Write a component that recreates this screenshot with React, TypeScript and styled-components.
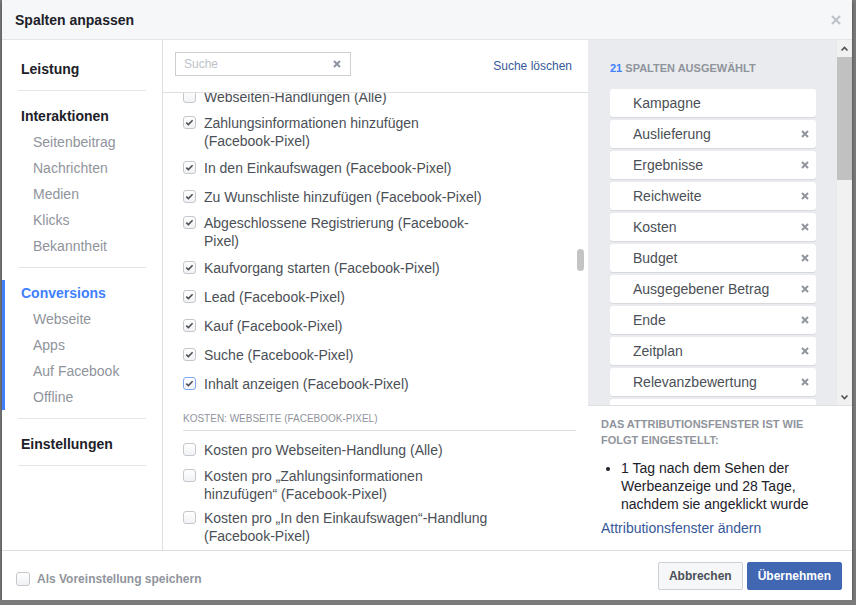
import React from 'react';
import styled, { createGlobalStyle } from 'styled-components';

const GlobalStyle = createGlobalStyle`
  html, body {
    margin: 0;
    padding: 0;
  }
  body {
    background: #7a7a7a;
    font-family: "Liberation Sans", Arial, sans-serif;
  }
  * {
    box-sizing: border-box;
  }
`;

const Page = styled.div`
  padding-left: 2px;
`;

const Dialog = styled.div`
  width: 850px;
  height: 600px;
  background: #fff;
  display: flex;
  flex-direction: column;
  box-shadow: 0 2px 3px rgba(0, 0, 0, 0.45);
`;

const Header = styled.div`
  height: 40px;
  flex: none;
  display: flex;
  align-items: center;
  justify-content: space-between;
  padding: 0 11px 0 13px;
  background: #f6f7f9;
  border-bottom: 1px solid #e5e5e5;
`;

const Title = styled.div`
  font-size: 14px;
  font-weight: bold;
  color: #1d2129;
`;

const IconButton = styled.span`
  display: flex;
  align-items: center;
  justify-content: center;
  cursor: pointer;
`;

const Body = styled.div`
  flex: 1;
  display: flex;
  min-height: 0;
`;

/* left navigation */

const Nav = styled.div`
  width: 161px;
  flex: none;
  border-right: 1px solid #dddfe2;
  padding-top: 4px;
`;

const NavSection = styled.div`
  padding: 12px 0 8px;
`;

const NavGroup = styled.div<{ $active?: boolean }>`
  border-left: 3px solid ${(p) => (p.$active ? '#4080ff' : 'transparent')};
  padding-left: 16px;
`;

const NavHeading = styled.div<{ $active?: boolean }>`
  font-size: 14px;
  font-weight: bold;
  line-height: 26px;
  color: ${(p) => (p.$active ? '#4080ff' : '#1d2129')};
`;

const NavItem = styled.div`
  font-size: 14px;
  line-height: 26px;
  color: #90949c;
  padding-left: 12px;
`;

const Divider = styled.div`
  height: 1px;
  margin: 0 16px;
  background: #e5e5e5;
`;

/* middle column */

const Middle = styled.div`
  width: 425px;
  flex: none;
  display: flex;
  flex-direction: column;
`;

const SearchBar = styled.div`
  height: 53px;
  flex: none;
  display: flex;
  align-items: flex-start;
  padding: 12px 16px 0 12px;
  border-bottom: 1px solid #dddfe2;
`;

const SearchBox = styled.div`
  width: 176px;
  height: 24px;
  display: flex;
  align-items: center;
  padding: 0 9px 0 8px;
  border: 1px solid #ccd0d5;
`;

const SearchInput = styled.input`
  flex: 1;
  min-width: 0;
  border: none;
  outline: none;
  padding: 0;
  background: transparent;
  font-family: inherit;
  font-size: 12px;
  color: #1d2129;
  &::placeholder {
    color: #bec2c9;
  }
`;

const TextLink = styled.a<{ $size?: number }>`
  font-size: ${(p) => p.$size ?? 12}px;
  line-height: ${(p) => (p.$size ? 18 : 16)}px;
  color: #365899;
  text-decoration: none;
  cursor: pointer;
`;

const ClearLink = styled(TextLink)`
  margin-left: auto;
  margin-top: 6px;
`;

const ListViewport = styled.div`
  flex: 1;
  overflow: hidden;
  position: relative;
`;

const List = styled.div`
  display: flex;
  flex-direction: column;
  margin-top: -8px;
  padding: 0 12px 0 20px;
`;

const Row = styled.div`
  display: flex;
  align-items: center;
  min-height: 23px;
  margin-bottom: 6px;
`;

const RowInner = styled.label`
  display: flex;
  align-items: flex-start;
  gap: 8px;
  cursor: pointer;
`;

const RowLabel = styled.span`
  max-width: 286px;
  font-size: 14px;
  line-height: 18px;
  color: #4b4f56;
`;

const Box = styled.span<{ $size: number; $focus?: boolean }>`
  width: ${(p) => p.$size}px;
  height: ${(p) => p.$size}px;
  flex: none;
  margin-top: ${(p) => (p.$size === 13 ? 2 : 0)}px;
  display: flex;
  align-items: center;
  justify-content: center;
  border: 1px solid ${(p) => (p.$focus ? '#7fa8f5' : '#c4c7cc')};
  border-radius: 3px;
  background: linear-gradient(#fff, #f1f2f4);
`;

const GroupHead = styled.div`
  margin: 11px 0 7px;
  padding-bottom: 4px;
  border-bottom: 1px solid #dddfe2;
  font-size: 10px;
  line-height: 14px;
  color: #90949c;
  text-transform: uppercase;
`;

const Thumb = styled.div`
  position: absolute;
  top: 156px;
  right: 4px;
  width: 7px;
  height: 22px;
  border-radius: 4px;
  background: #c4c4c4;
`;

/* right panel */

const Right = styled.div`
  flex: 1;
  display: flex;
  flex-direction: column;
`;

const SelectedArea = styled.div`
  height: 365px;
  flex: none;
  display: flex;
  background: #e9ebee;
`;

const SelectedScroll = styled.div`
  flex: 1;
  overflow: hidden;
  padding: 20px 21px 0 22px;
`;

const SmallCaps = styled.div`
  font-size: 11px;
  font-weight: bold;
  line-height: 16px;
  color: #90949c;
  text-transform: uppercase;
`;

const SelectedHeading = styled(SmallCaps)`
  margin-bottom: 13px;
`;

const Count = styled.span`
  color: #4080ff;
`;

const ColumnList = styled.div`
  display: flex;
  flex-direction: column;
  gap: 3px;
`;

const ColumnItem = styled.div`
  height: 28px;
  flex: none;
  display: flex;
  align-items: center;
  justify-content: space-between;
  padding: 0 7px 0 23px;
  background: #fff;
  border-radius: 3px;
  box-shadow: 0 1px 0 #d6d9dd;
  font-size: 14px;
  color: #4b4f56;
`;

const ScrollTrack = styled.div`
  width: 15px;
  flex: none;
  display: flex;
  flex-direction: column;
  background: #f1f1f1;
`;

const ScrollArrow = styled.div`
  height: 17px;
  flex: none;
  display: flex;
  align-items: center;
  justify-content: center;
`;

const ScrollThumb = styled.div`
  height: 123px;
  flex: none;
  background: #c1c1c1;
`;

const Spacer = styled.div`
  flex: 1;
`;

const AttrBox = styled.div`
  flex: 1;
  border-top: 1px solid #dddfe2;
  padding: 10px 12px 0 13px;
`;

const BulletList = styled.ul`
  margin: 11px 0 6px;
  padding-left: 20px;
  font-size: 14px;
  line-height: 18px;
  color: #1d2129;
`;

/* footer */

const Footer = styled.div`
  height: 50px;
  flex: none;
  display: flex;
  align-items: center;
  justify-content: space-between;
  padding: 0 10px 0 14px;
  border-top: 1px solid #dddfe2;
`;

const PresetLabel = styled.label`
  display: flex;
  align-items: center;
  gap: 7px;
  margin-top: 7px;
  font-size: 12px;
  font-weight: bold;
  color: #90949c;
`;

const Buttons = styled.div`
  display: flex;
  gap: 4px;
`;

const Button = styled.button<{ $primary?: boolean }>`
  height: 28px;
  padding: 0 10px;
  border-radius: 2px;
  border: 1px solid ${(p) => (p.$primary ? '#4267b2' : '#ced0d4')};
  background: ${(p) => (p.$primary ? '#4267b2' : '#f6f7f9')};
  color: ${(p) => (p.$primary ? '#fff' : '#4b4f56')};
  font-family: inherit;
  font-size: 12px;
  font-weight: bold;
  cursor: pointer;
`;

const Cross: React.FC<{ size: number; color: string; width?: number }> = ({ size, color, width = 2 }) => (
  <svg width={size} height={size} viewBox={`0 0 ${size} ${size}`}>
    <path d={`M1 1L${size - 1} ${size - 1}M${size - 1} 1L1 ${size - 1}`} stroke={color} strokeWidth={width} />
  </svg>
);

const Check = () => (
  <svg width="11" height="11" viewBox="0 0 11 11">
    <polyline points="2.3,5.6 4.4,7.6 8.6,3.2" fill="none" stroke="#4b4f56" strokeWidth="1.6" />
  </svg>
);

const Chevron: React.FC<{ down?: boolean }> = ({ down }) => (
  <svg width="9" height="6" viewBox="0 0 9 6">
    <polyline
      points={down ? '1.5,1.5 4.5,4.5 7.5,1.5' : '1.5,4.5 4.5,1.5 7.5,4.5'}
      fill="none"
      stroke="#505050"
      strokeWidth="1.6"
    />
  </svg>
);

const Checkbox: React.FC<{ checked?: boolean; focus?: boolean; size?: number }> = ({ checked, focus, size = 13 }) => (
  <Box $size={size} $focus={focus}>
    {checked && <Check />}
  </Box>
);

const navSections = [
  { title: 'Leistung', items: [] as string[] },
  { title: 'Interaktionen', items: ['Seitenbeitrag', 'Nachrichten', 'Medien', 'Klicks', 'Bekanntheit'] },
  { title: 'Conversions', items: ['Webseite', 'Apps', 'Auf Facebook', 'Offline'], active: true },
  { title: 'Einstellungen', items: [] as string[] },
];

type Item = { label: string; checked?: boolean; focus?: boolean };

const conversionItems: Item[] = [
  { label: 'Webseiten-Handlungen (Alle)' },
  { label: 'Zahlungsinformationen hinzufügen (Facebook-Pixel)', checked: true },
  { label: 'In den Einkaufswagen (Facebook-Pixel)', checked: true },
  { label: 'Zu Wunschliste hinzufügen (Facebook-Pixel)', checked: true },
  { label: 'Abgeschlossene Registrierung (Facebook-Pixel)', checked: true },
  { label: 'Kaufvorgang starten (Facebook-Pixel)', checked: true },
  { label: 'Lead (Facebook-Pixel)', checked: true },
  { label: 'Kauf (Facebook-Pixel)', checked: true },
  { label: 'Suche (Facebook-Pixel)', checked: true },
  { label: 'Inhalt anzeigen (Facebook-Pixel)', checked: true, focus: true },
];

const costItems: Item[] = [
  { label: 'Kosten pro Webseiten-Handlung (Alle)' },
  { label: 'Kosten pro „Zahlungsinformationen hinzufügen“ (Facebook-Pixel)' },
  { label: 'Kosten pro „In den Einkaufswagen“-Handlung (Facebook-Pixel)' },
  { label: 'Kosten pro „Zur Wunschliste hinzufügen“ (Facebook-Pixel)' },
];

const columns = [
  'Kampagne',
  'Auslieferung',
  'Ergebnisse',
  'Reichweite',
  'Kosten',
  'Budget',
  'Ausgegebener Betrag',
  'Ende',
  'Zeitplan',
  'Relevanzbewertung',
  'Impressionen',
  'Frequenz',
];

const renderRows = (items: Item[]) =>
  items.map((item) => (
    <Row key={item.label}>
      <RowInner>
        <Checkbox checked={item.checked} focus={item.focus} />
        <RowLabel>{item.label}</RowLabel>
      </RowInner>
    </Row>
  ));

const App: React.FC = () => {
  return (
    <Page>
      <GlobalStyle />
      <Dialog>
        <Header>
          <Title>Spalten anpassen</Title>
          <IconButton>
            <Cross size={10} color="#bec2c9" />
          </IconButton>
        </Header>
        <Body>
          <Nav>
            {navSections.map((section) => (
              <React.Fragment key={section.title}>
                <NavSection>
                  <NavGroup $active={section.active}>
                    <NavHeading $active={section.active}>{section.title}</NavHeading>
                    {section.items.map((item) => (
                      <NavItem key={item}>{item}</NavItem>
                    ))}
                  </NavGroup>
                </NavSection>
                <Divider />
              </React.Fragment>
            ))}
          </Nav>
          <Middle>
            <SearchBar>
              <SearchBox>
                <SearchInput placeholder="Suche" />
                <IconButton>
                  <Cross size={8} color="#8d949e" />
                </IconButton>
              </SearchBox>
              <ClearLink>Suche löschen</ClearLink>
            </SearchBar>
            <ListViewport>
              <List>
                {renderRows(conversionItems)}
                <GroupHead>Kosten: Webseite (Facebook-Pixel)</GroupHead>
                {renderRows(costItems)}
              </List>
              <Thumb />
            </ListViewport>
          </Middle>
          <Right>
            <SelectedArea>
              <SelectedScroll>
                <SelectedHeading>
                  <Count>21</Count> Spalten ausgewählt
                </SelectedHeading>
                <ColumnList>
                  {columns.map((col, i) => (
                    <ColumnItem key={col}>
                      {col}
                      {i > 0 && <Cross size={8} color="#90949c" />}
                    </ColumnItem>
                  ))}
                </ColumnList>
              </SelectedScroll>
              <ScrollTrack>
                <ScrollArrow>
                  <Chevron />
                </ScrollArrow>
                <ScrollThumb />
                <Spacer />
                <ScrollArrow>
                  <Chevron down />
                </ScrollArrow>
              </ScrollTrack>
            </SelectedArea>
            <AttrBox>
              <SmallCaps>Das Attributionsfenster ist wie folgt eingestellt:</SmallCaps>
              <BulletList>
                <li>1 Tag nach dem Sehen der Werbeanzeige und 28 Tage, nachdem sie angeklickt wurde</li>
              </BulletList>
              <TextLink $size={14}>Attributionsfenster ändern</TextLink>
            </AttrBox>
          </Right>
        </Body>
        <Footer>
          <PresetLabel>
            <Checkbox size={14} />
            Als Voreinstellung speichern
          </PresetLabel>
          <Buttons>
            <Button>Abbrechen</Button>
            <Button $primary>Übernehmen</Button>
          </Buttons>
        </Footer>
      </Dialog>
    </Page>
  );
};

export default App;
